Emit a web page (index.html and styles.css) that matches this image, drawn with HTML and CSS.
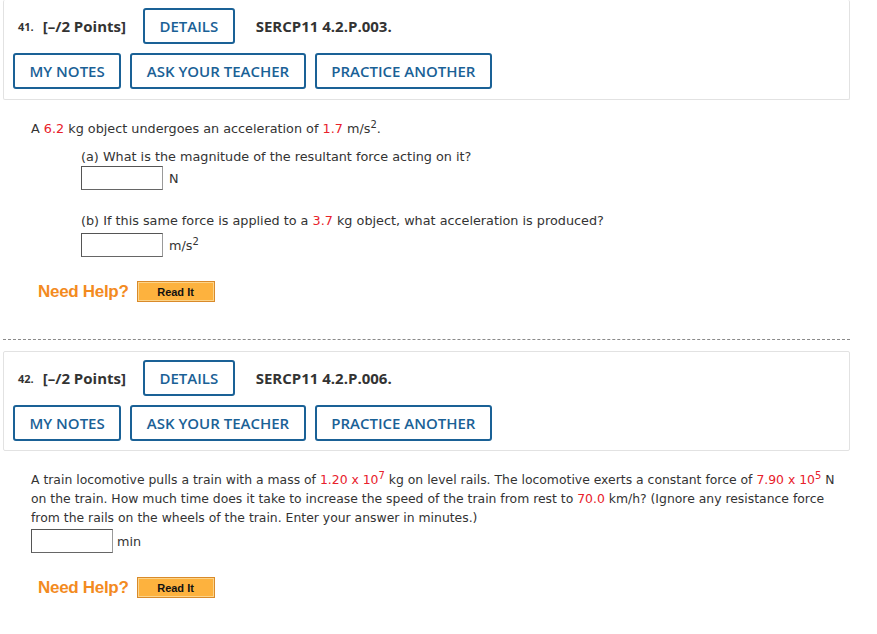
FILE: index.html
```html
<!DOCTYPE html>
<html>
<head>
<meta charset="utf-8">
<link rel="stylesheet" href="styles.css">
</head>
<body>
<div class="page">
  <section class="question">
    <div class="qhead first">
      <div class="row1">
        <span class="num">41.</span>
        <span class="pts">[–/2 Points]</span>
        <button class="btn">DETAILS</button>
        <span class="code">SERCP11 4.2.P.003.</span>
      </div>
      <div class="row2">
        <button class="btn">MY NOTES</button>
        <button class="btn">ASK YOUR TEACHER</button>
        <button class="btn">PRACTICE ANOTHER</button>
      </div>
    </div>
    <div class="qbody q1">
      <p class="stem">A <span class="red">6.2</span> kg object undergoes an acceleration of <span class="red">1.7</span> m/s<sup>2</sup>.</p>
      <div class="part">
        <p class="ptext">(a) What is the magnitude of the resultant force acting on it?</p>
        <div class="answer"><span class="inp"></span><span class="unit">N</span></div>
      </div>
      <div class="part partb">
        <p class="ptext">(b) If this same force is applied to a <span class="red">3.7</span> kg object, what acceleration is produced?</p>
        <div class="answer answerb"><span class="inp"></span><span class="unit">m/s<sup>2</sup></span></div>
      </div>
      <div class="help"><span class="need">Need Help?</span><span class="readit">Read It</span></div>
    </div>
  </section>
  <hr class="sep">
  <section class="question">
    <div class="qhead">
      <div class="row1">
        <span class="num">42.</span>
        <span class="pts">[–/2 Points]</span>
        <button class="btn">DETAILS</button>
        <span class="code">SERCP11 4.2.P.006.</span>
      </div>
      <div class="row2">
        <button class="btn">MY NOTES</button>
        <button class="btn">ASK YOUR TEACHER</button>
        <button class="btn">PRACTICE ANOTHER</button>
      </div>
    </div>
    <div class="qbody q2">
      <p class="stem train">A train locomotive pulls a train with a mass of <span class="red">1.20 x 10</span><sup class="red">7</sup> kg on level rails. The locomotive exerts a constant force of <span class="red">7.90 x 10</span><sup class="red">5</sup> N on the train. How much time does it take to increase the speed of the train from rest to <span class="red">70.0</span> km/h? (Ignore any resistance force from the rails on the wheels of the train. Enter your answer in minutes.)</p>
      <div class="answer tanswer"><span class="inp"></span><span class="unit">min</span></div>
      <div class="help"><span class="need">Need Help?</span><span class="readit">Read It</span></div>
    </div>
  </section>
</div>
</body>
</html>
```
FILE: styles.css
```css
* { box-sizing: border-box; }
html, body { margin: 0; padding: 0; background: #fff; }
.page { width: 847px; margin-left: 3px; }
.qhead {
  border: 1px solid #e2e2e2;
  border-radius: 2px;
  padding: 8px 9px 9px 9px;
  display: flex;
  flex-direction: column;
  gap: 9px;
  font-family: "Open Sans", sans-serif;
}
.qhead.first { border-top: none; padding-top: 8px; padding-bottom: 10px; }
.row1 { display: flex; align-items: center; padding-left: 5px; }
.num { font-size: 11px; font-weight: 700; color: #333; margin-right: 9px; }
.pts { font-size: 15px; font-weight: 700; color: #333; margin-right: 17px; }
.code { font-size: 15px; font-weight: 700; color: #333; margin-left: 21px; }
.row2 { display: flex; gap: 9px; }
.btn {
  font-family: "Open Sans", sans-serif;
  font-size: 15px;
  font-weight: 600;
  color: #1a6196;
  background: #fff;
  border: 2px solid #1a6196;
  border-radius: 3px;
  height: 36px;
  padding: 0 14.5px;
  line-height: 32px;
}
.qbody {
  padding: 21px 0 0 28px;
  font-family: "DejaVu Sans", sans-serif;
  font-size: 12.8px;
  color: #333;
}
.qbody.q2 { padding-top: 19px; }
.stem { margin: 0; line-height: 16px; }
.red { color: #e8212b; }
sup { font-size: 10px; line-height: 0; vertical-align: 5px; }
.part { margin-left: 50px; margin-top: 12px; }
.partb { margin-top: 23px; }
.ptext { margin: 0; line-height: 16px; }
.answer { display: flex; align-items: center; margin-top: 1px; }
.answer.answerb { margin-top: 4px; }
.inp {
  display: inline-block;
  width: 82px;
  height: 24px;
  border: 1px solid #9a9a9a;
  border-top-color: #555;
  border-left-color: #555;
  border-bottom-color: #666;
  background: #fff;
}
.unit { margin-left: 6px; }
.help { display: flex; align-items: center; margin-top: 24px; margin-left: 7px; }
.need {
  font-family: "Liberation Sans", Arial, sans-serif;
  font-size: 17px;
  font-weight: 700;
  color: #f38b1f;
  letter-spacing: -0.3px;
}
.readit {
  margin-left: 8px;
  width: 78px;
  height: 21px;
  border: 1px solid #d98a2a;
  box-shadow: inset 0 0 0 1px #fcd48a;
  background: #fdb23e;
  font-family: "Liberation Sans", Arial, sans-serif;
  font-size: 11px;
  font-weight: 700;
  color: #111;
  display: flex;
  align-items: center;
  justify-content: center;
}
.sep {
  margin: 37px 0 11px 0;
  border: none;
  border-top: 1px dashed #8a8a8a;
  height: 0;
}
.train { font-size: 12.4px; line-height: 19px; padding-right: 10px; }
.tanswer { margin-top: 2px; }
.tanswer .unit { margin-left: 4px; }
```
